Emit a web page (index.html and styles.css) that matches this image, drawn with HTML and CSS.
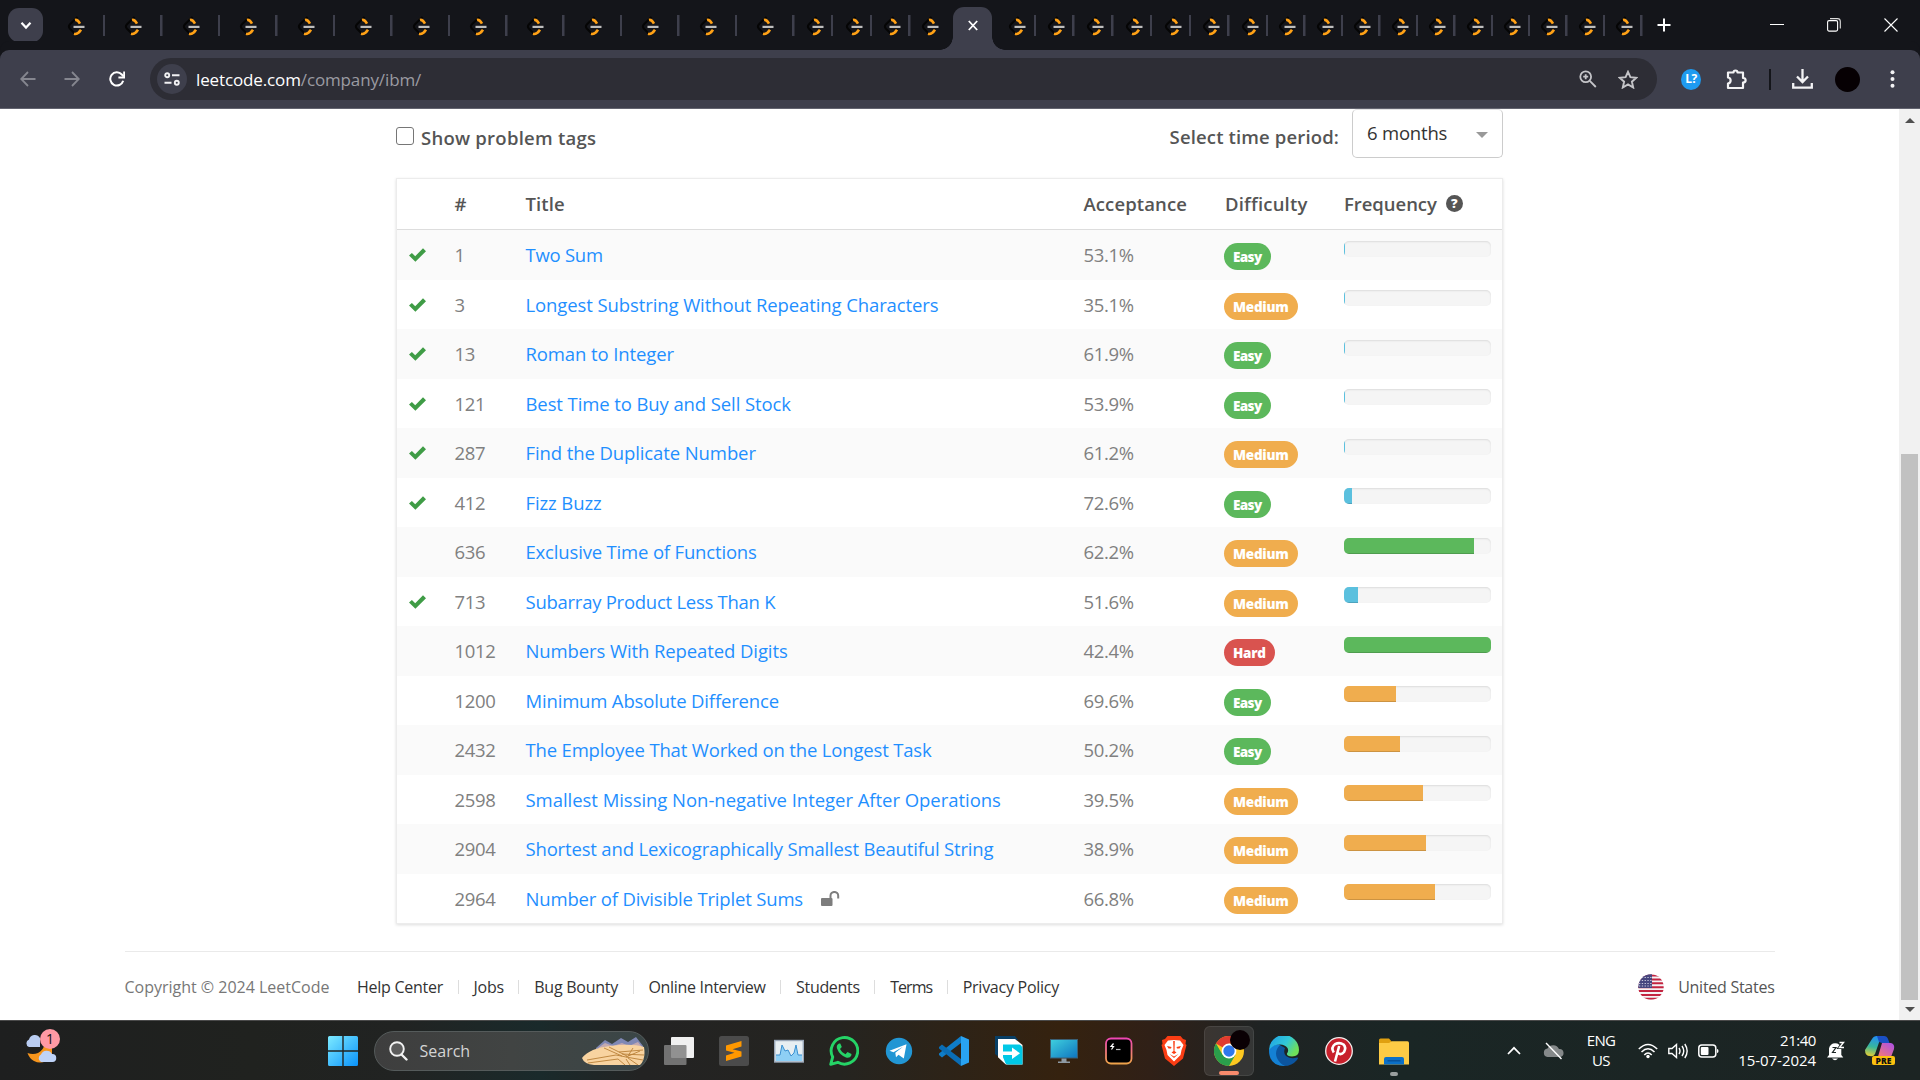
FILE: index.html
```html
<!DOCTYPE html>
<html lang="en">
<head>
<meta charset="utf-8">
<title>IBM - LeetCode</title>
<link rel="stylesheet" href="styles.css">
</head>
<body>
<svg class="defs" width="0" height="0">
  <symbol id="leet" viewBox="0 0 18 20">
    <path d="M10.500 1 3 8.200Q.8 10.500 3 12.800L7.500 17.300Q9.300 19 11 18" fill="none" stroke="#050505" stroke-width="2"/>
    <path d="M8 4Q10.500 3.300 13 7.600" fill="none" stroke="#ffa116" stroke-width="2.600"/>
    <path d="M7 17.800Q10.800 18.800 14 13.800" fill="none" stroke="#ffa116" stroke-width="2.600"/>
    <path d="M6.500 10.900H17.500" stroke="#bdbdbd" stroke-width="2.200"/>
  </symbol>
  <symbol id="tick" viewBox="0 0 17 14"><path d="M0 7.600 2.900 4.900 6.200 8.200 14 .3 17 3.200 6.400 13.800Z" fill="#3f9c46"/></symbol>
</svg>

<header class="tabstrip">
  <div class="tabsearch"><svg width="12" height="9" viewBox="0 0 12 9"><path d="M1.500 1.800 6 6.600 10.500 1.800" fill="none" stroke="#fff" stroke-width="2.200"/></svg></div>
  <nav class="tabs">
    <i class="tab wide"><svg><use href="#leet"/></svg></i><i class="tab wide"><svg><use href="#leet"/></svg></i><i class="tab wide"><svg><use href="#leet"/></svg></i><i class="tab wide"><svg><use href="#leet"/></svg></i><i class="tab wide"><svg><use href="#leet"/></svg></i><i class="tab wide"><svg><use href="#leet"/></svg></i><i class="tab wide"><svg><use href="#leet"/></svg></i><i class="tab wide"><svg><use href="#leet"/></svg></i><i class="tab wide"><svg><use href="#leet"/></svg></i><i class="tab wide"><svg><use href="#leet"/></svg></i><i class="tab wide"><svg><use href="#leet"/></svg></i><i class="tab wide"><svg><use href="#leet"/></svg></i><i class="tab wide"><svg><use href="#leet"/></svg></i>
    <i class="tab mid"><svg><use href="#leet"/></svg></i><i class="tab mid"><svg><use href="#leet"/></svg></i><i class="tab mid"><svg><use href="#leet"/></svg></i>
    <i class="tab before"><svg><use href="#leet"/></svg></i>
    <i class="tab active"><svg class="x" width="10" height="11" viewBox="0 0 10 11"><path d="M.8 1 9.200 10M9.200 1 .8 10" stroke="#fff" stroke-width="1.800"/></svg></i>
    <i class="tab after"><svg><use href="#leet"/></svg></i>
    <i class="tab mid"><svg><use href="#leet"/></svg></i><i class="tab mid"><svg><use href="#leet"/></svg></i><i class="tab mid"><svg><use href="#leet"/></svg></i><i class="tab mid"><svg><use href="#leet"/></svg></i><i class="tab mid"><svg><use href="#leet"/></svg></i><i class="tab mid"><svg><use href="#leet"/></svg></i>
    <i class="tab slim"><svg><use href="#leet"/></svg></i><i class="tab slim"><svg><use href="#leet"/></svg></i><i class="tab slim"><svg><use href="#leet"/></svg></i><i class="tab slim"><svg><use href="#leet"/></svg></i><i class="tab slim"><svg><use href="#leet"/></svg></i><i class="tab slim"><svg><use href="#leet"/></svg></i><i class="tab slim"><svg><use href="#leet"/></svg></i><i class="tab slim"><svg><use href="#leet"/></svg></i><i class="tab slim"><svg><use href="#leet"/></svg></i><i class="tab slim"><svg><use href="#leet"/></svg></i>
  </nav>
  <svg class="newtab" width="14" height="14" viewBox="0 0 14 14"><path d="M7 .5V13.500M.5 7H13.500" stroke="#fff" stroke-width="2"/></svg>
  <div class="winbtns">
    <svg width="14" height="14" viewBox="0 0 14 14"><path d="M0 6.500H14" stroke="#fff"/></svg>
    <svg width="14" height="14" viewBox="0 0 14 14"><rect x=".6" y="2.600" width="10" height="10.500" rx="1.500" fill="none" stroke="#fff" stroke-width="1.100"/><path d="M3 .6H10.500Q13.300.6 13.300 3.500V10.500" fill="none" stroke="#ddd" stroke-width="1.100"/></svg>
    <svg width="14" height="14" viewBox="0 0 14 14"><path d="M.5.5 13.500 13.500M13.500.5.5 13.500" stroke="#fff" stroke-width="1.100"/></svg>
  </div>
</header>

<div class="toolbar">
  <svg class="back" width="16" height="16" viewBox="0 0 16 16"><path d="M15.500 8H1.500M8 1 1.200 8 8 15" fill="none" stroke="#85868f" stroke-width="1.800"/></svg>
  <svg class="fwd" width="16" height="16" viewBox="0 0 16 16"><path d="M.5 8H14.500M8 1 14.800 8 8 15" fill="none" stroke="#85868f" stroke-width="1.800"/></svg>
  <svg class="reload" width="16" height="16" viewBox="0 0 16 16"><path d="M14.200 9.800A6.600 6.600 0 1 1 12.800 3.500L14.500 5.400" fill="none" stroke="#fff" stroke-width="2"/><path d="M15.200.6V6.400H9.400" fill="none" stroke="#fff" stroke-width="2"/></svg>
  <div class="omnibox">
    <span class="site"><svg width="16" height="14" viewBox="0 0 16 14"><g fill="none" stroke="#f1f1f3" stroke-width="1.900"><circle cx="3.200" cy="3.200" r="2"/><path d="M8 3.200H15.500M.5 10.800H7.500"/><circle cx="12.800" cy="10.800" r="2"/></g></svg></span>
    <span class="url"><b>leetcode.com</b>/company/ibm/</span>
    <svg class="mag" width="18" height="18" viewBox="0 0 18 18"><g fill="none" stroke="#c4c4c8" stroke-width="1.800"><circle cx="6.700" cy="6.700" r="5.400"/><path d="M10.800 10.800 16.800 17M6.700 4.200V9.200M4.200 6.700H9.200"/></g></svg>
    <svg class="star" width="20" height="19" viewBox="0 0 20 19"><path d="M10 1.800 12.400 7.200 18.300 7.800 13.900 11.700 15.200 17.500 10 14.400 4.800 17.500 6.100 11.700 1.700 7.800 7.600 7.200Z" fill="none" stroke="#c4c4c8" stroke-width="1.900"/></svg>
  </div>
  <span class="ext">L?</span>
  <svg class="puzzle" width="21" height="21" viewBox="0 0 21 21"><path d="M2 3.500H7.500C7.500.8 11.500.8 11.500 3.500H17V9C20.500 9 20.500 13.500 17 13.500V19H2V14.500C5.500 14 5.500 9 2 8.500Z" fill="none" stroke="#f3f3f5" stroke-width="2.200" stroke-linejoin="round"/></svg>
  <span class="vr"></span>
  <svg class="dl" width="21" height="20" viewBox="0 0 21 20"><path d="M10.500 0V12.500M5 7.500 10.500 13 16 7.500M1.200 14V18.600H19.800V14" fill="none" stroke="#f3f3f5" stroke-width="2.300"/></svg>
  <span class="avatar"></span>
  <svg class="dots" width="5" height="18" viewBox="0 0 5 18"><g fill="#f3f3f5"><circle cx="2.500" cy="2.300" r="2"/><circle cx="2.500" cy="9" r="2"/><circle cx="2.500" cy="15.700" r="2"/></g></svg>
</div>

<div class="viewport">
  <main class="page">
    <section class="content">
      <div class="filters">
        <span class="tags"><i class="box"></i>Show problem tags</span>
        <span class="period"><span class="plabel">Select time period:</span><span class="select">6 months<i></i></span></span>
      </div>
      <div class="table">
        <div class="row head"><span></span><span>#</span><span>Title</span><span>Acceptance</span><span>Difficulty</span><span class="freq">Frequency <i>?</i></span></div>
        <div class="row"><svg><use href="#tick"/></svg><span>1</span><a class="snug">Two Sum</a><span>53.1%</span><b class="easy">Easy</b><div class="bar"><i class="info" style="width:.5%"></i></div></div>
        <div class="row"><svg><use href="#tick"/></svg><span>3</span><a>Longest Substring Without Repeating Characters</a><span>35.1%</span><b class="medium">Medium</b><div class="bar"><i class="info" style="width:.5%"></i></div></div>
        <div class="row"><svg><use href="#tick"/></svg><span>13</span><a>Roman to Integer</a><span>61.9%</span><b class="easy">Easy</b><div class="bar"><i class="info" style="width:.5%"></i></div></div>
        <div class="row"><svg><use href="#tick"/></svg><span>121</span><a>Best Time to Buy and Sell Stock</a><span>53.9%</span><b class="easy">Easy</b><div class="bar"><i class="info" style="width:.5%"></i></div></div>
        <div class="row"><svg><use href="#tick"/></svg><span>287</span><a>Find the Duplicate Number</a><span>61.2%</span><b class="medium">Medium</b><div class="bar"><i class="info" style="width:.5%"></i></div></div>
        <div class="row"><svg><use href="#tick"/></svg><span>412</span><a>Fizz Buzz</a><span>72.6%</span><b class="easy">Easy</b><div class="bar"><i class="info" style="width:5.500%"></i></div></div>
        <div class="row"><span></span><span>636</span><a class="tight">Exclusive Time of Functions</a><span>62.2%</span><b class="medium">Medium</b><div class="bar"><i class="success" style="width:88.500%"></i></div></div>
        <div class="row"><svg><use href="#tick"/></svg><span>713</span><a class="snug">Subarray Product Less Than K</a><span>51.6%</span><b class="medium">Medium</b><div class="bar"><i class="info" style="width:9.600%"></i></div></div>
        <div class="row"><span></span><span>1012</span><a>Numbers With Repeated Digits</a><span>42.4%</span><b class="hard">Hard</b><div class="bar"><i class="success" style="width:100%"></i></div></div>
        <div class="row"><span></span><span>1200</span><a class="tight">Minimum Absolute Difference</a><span>69.6%</span><b class="easy">Easy</b><div class="bar"><i class="warning" style="width:35.400%"></i></div></div>
        <div class="row"><span></span><span>2432</span><a class="tight">The Employee That Worked on the Longest Task</a><span>50.2%</span><b class="easy">Easy</b><div class="bar"><i class="warning" style="width:38.100%"></i></div></div>
        <div class="row"><span></span><span>2598</span><a class="loose">Smallest Missing Non-negative Integer After Operations</a><span>39.5%</span><b class="medium">Medium</b><div class="bar"><i class="warning" style="width:53.800%"></i></div></div>
        <div class="row"><span></span><span>2904</span><a class="tight">Shortest and Lexicographically Smallest Beautiful String</a><span>38.9%</span><b class="medium">Medium</b><div class="bar"><i class="warning" style="width:55.800%"></i></div></div>
        <div class="row"><span></span><span>2964</span><a class="tight">Number of Divisible Triplet Sums<svg class="lock" width="19" height="15" viewBox="0 0 19 15"><rect x="0" y="7" width="11.500" height="8" rx="1" fill="#7d7d7d"/><path d="M9.500 7.500V4.800A3.800 3.800 0 0 1 17.200 4.800V7.500" fill="none" stroke="#7d7d7d" stroke-width="2"/></svg></a><span>66.8%</span><b class="medium">Medium</b><div class="bar"><i class="warning" style="width:61.900%"></i></div></div>
      </div>
    </section>
    <footer class="footer">
      <span class="copy">Copyright © 2024 LeetCode</span>
      <nav class="links"><a>Help Center</a><a>Jobs</a><a>Bug Bounty</a><a class="students">Online Interview</a><a class="students">Students</a><a class="terms">Terms</a><a>Privacy Policy</a></nav>
      <span class="country">
        <svg width="26" height="26" viewBox="0 0 26 26"><clipPath id="fc"><circle cx="13" cy="13" r="12.700"/></clipPath><g clip-path="url(#fc)"><path fill="#f5f3f5" d="M0 0H26V26H0Z"/><path d="M0 1.500H26M0 5.400H26M0 9.300H26M0 13.200H26M0 17H26M0 20.900H26M0 24.800H26" stroke="#c32440" stroke-width="2"/><path d="M0 0H14V14H0Z" fill="#46467f"/><path d="M1 3.500H14M1 6.500H14M1 9.500H14M1 12H14" stroke="#c9c9dc" stroke-width="1.200" stroke-dasharray="1.300 1.500"/></g></svg>
        United States</span>
    </footer>
  </main>
  <aside class="scroll"><i class="up"></i><i class="thumb"></i><i class="down"></i></aside>
</div>

<div class="taskbar">
  <div class="weather">
    <svg width="34" height="36" viewBox="0 0 34 36"><path d="M27 20V27L21 33Q15 36 9 33 4 30 2.500 25 8 27 13 25 18 22 19 18Z" fill="#f6951d"/><path d="M4 19A4 4 0 0 1 4 11.500 6 6 0 0 1 15 10V19Z" fill="#b9cdf2"/><path d="M16 34A4.200 4.200 0 0 1 16 26.500 6 6 0 0 1 27 26 4 4 0 0 1 27.500 34Z" fill="#bfd3f8"/></svg>
    <span>1</span>
  </div>
  <svg class="start" width="30" height="30" viewBox="0 0 30 30"><defs><linearGradient id="wg" x1="0" y1="0" x2="1" y2="1"><stop offset="0" stop-color="#7deaff"/><stop offset="1" stop-color="#0a93fb"/></linearGradient></defs><path d="M1.500 0H14.300V14.300H0V1.500Q0 0 1.500 0ZM15.700 0H28.500Q30 0 30 1.500V14.300H15.700ZM0 15.700H14.300V30H1.500Q0 30 0 28.500ZM15.700 15.700H30V28.500Q30 30 28.500 30H15.700Z" fill="url(#wg)"/></svg>
  <div class="search">
    <svg width="19" height="20" viewBox="0 0 19 20"><circle cx="8" cy="8" r="6.800" fill="#77777788" stroke="#f2f2f2" stroke-width="1.900"/><path d="M12.500 13.500 17.500 18.500" stroke="#f2f2f2" stroke-width="2.400" stroke-linecap="round"/></svg>
    <span>Search</span>
    <svg class="sand" width="63" height="29" viewBox="0 0 63 29"><path d="M14 11 23 3 30 7 39 1 46 5 54 0 61 9V14H14Z" fill="#7f88b5"/><path d="M16 11 23 6 31 9 40 6 47 9 56 5 60 10 50 13Z" fill="#c3a9b0"/><path d="M0 21Q8 11 28 9Q50 6 62 10Q64 22 58 28H12Q2 27 0 21Z" fill="#f8d3a0"/><path d="M5 23 34 18 44 20 58 14M6 26 36 22 43 28M22 11 40 19M27 10 45 19M37 15 61 13M40 17 62 18M44 20 61 23M46 21 56 28M44 22 48 28M51 11 46 19" fill="none" stroke="#b98038" stroke-width=".9"/></svg>
  </div>
  <div class="apps">
    <span><svg width="30" height="30" viewBox="0 0 30 30"><rect x="7" y="1" width="23" height="21" rx="1" fill="#f0f0f0"/><rect x="0" y="9" width="22.500" height="20" rx="1" fill="#808080" opacity=".85"/></svg></span>
    <span><svg width="30" height="30" viewBox="0 0 30 30"><rect width="30" height="30" rx="2.500" fill="#4b4b4b"/><path d="M7 9.500 22.500 5V10.500L13.500 13.300 22.500 15.500V20.500L7 25V19.500L15.500 16.800 7 14.500Z" fill="#ff9800"/></svg></span>
    <span><svg width="30" height="30" viewBox="0 0 30 30"><rect x=".7" y="4.500" width="28.600" height="21.500" fill="#e7eef2" stroke="#9aa7b8" stroke-width="1.400"/><path d="M2 19H6L8 9 11 15 14 14 17 20 20 17 22 9 24 19 28 19V25H2Z" fill="#8ecff5"/><path d="M2 19H6L8 9 11 15 14 14 17 20 20 17 22 9 24 19 28 19" fill="none" stroke="#3a8fd0"/></svg></span>
    <span><svg width="30" height="30" viewBox="0 0 30 30"><path d="M1.700 28.300 3.700 21A13.300 13.300 0 1 1 8.800 26.300Z" fill="none" stroke="#25d366" stroke-width="2.900" stroke-linejoin="round"/><path d="M10 7.500Q7 9 8 12.500 10.500 19 17 21.500 21 22.500 22.300 19.500L22.500 18 18.500 16 16.500 18.200Q12.500 16.500 11 13L12.800 11 11.300 7.500Z" fill="#25d366"/></svg></span>
    <span><svg width="30" height="30" viewBox="0 0 30 30"><circle cx="15" cy="15" r="13.200" fill="#2296d4"/><path d="M5.500 14.800 22.500 8.200 19.800 22.500 14.500 18.800 12 21.300 11.300 16.800 19 10.800 9.500 16.300Z" fill="#fff"/></svg></span>
    <span><svg width="30" height="30" viewBox="0 0 30 30"><path d="M22 7 3 21.500 0 19V17.500L22 0Z" fill="#0f7dc8"/><path d="M22 23 3 8.500 0 11V12.500L22 30Z" fill="#0a6db5"/><path d="M22 0 30 3.500V26.500L22 30Z" fill="#29a3f2"/></svg></span>
    <span><svg width="30" height="30" viewBox="0 0 30 30"><path d="M1 0H21L24 4H6V22L1 18Z" fill="#083f66"/><path d="M4 3H21L28.500 9V28.500H12L4 21Z" fill="#fff"/><path d="M14 8H24Q28.500 9 28.500 13V28.500H14Q10 28 9 23V8Z" fill="#00c8e6"/><path d="M4 3H20L25 8.500H8.500V20L12 28.500 4 21Z" fill="#fff"/><path d="M8.500 15.500H18V11.500L26 17.300 18 23V19H8.500Z" fill="#fff"/></svg></span>
    <span><svg width="30" height="30" viewBox="0 0 30 30"><defs><linearGradient id="pc" x1="0" y1="0" x2="1" y2="1"><stop offset="0" stop-color="#3fd0de"/><stop offset="1" stop-color="#0e74c0"/></linearGradient></defs><rect x="1.500" y="3.500" width="27" height="18.500" fill="url(#pc)" stroke="#3a5f74"/><path d="M12.500 22.500H17.500V25.500H21V27H9V25.500H12.500Z" fill="#8e9aa3"/></svg></span>
    <span><svg width="30" height="30" viewBox="0 0 30 30"><defs><linearGradient id="tg" x1="0" y1="0" x2="0" y2="1"><stop offset="0" stop-color="#ef47b4"/><stop offset="1" stop-color="#eea34a"/></linearGradient></defs><rect x="2" y="2.500" width="25.500" height="25" rx="5" fill="#000" stroke="url(#tg)" stroke-width="1.800"/><path d="M9.500 7.500 7 10.500H9.500L7.500 13.500" fill="none" stroke="#fff" stroke-width="1.200"/><path d="M12 13.500H16.500" stroke="#bbb" stroke-width="1.200"/></svg></span>
    <span><svg width="30" height="30" viewBox="0 0 30 30"><path d="M8.500 0H21.500L24 3 27 4 26.500 8 27.500 9 24 22.500 15 30 6 22.500 2.500 9 3.500 8 3 4 6 3Z" fill="#fb3d14"/><path d="M15 4 21 4.500 24.500 9 22.500 14 21.500 19 15 25.500 8.500 19 7.500 14 5.500 9 9 4.500Z" fill="#fff"/><path d="M8 10 12.500 11 12 12.500H9.500ZM22 10 17.500 11 18 12.500H20.500ZM14.200 5H15.800L15.500 15 17.500 16.500 15 18 12.500 16.500 14.500 15ZM10.500 18 15 20.500 19.500 18 15 22Z" fill="#fb3d14"/></svg></span>
    <span class="current"><svg width="30" height="30" viewBox="0 0 30 30"><circle cx="15" cy="15" r="15" fill="#fdc820"/><path d="M15 15 2 7.500A15 15 0 0 1 28 7.500H15Z" fill="#e13b30"/><path d="M2 7.500A15 15 0 0 0 15 30L21.500 18.800 15 15 8.500 18.800Z" fill="#2a9e4b"/><circle cx="15" cy="15" r="7.400" fill="#fff"/><circle cx="15" cy="15" r="5.700" fill="#2e78ec"/></svg><em></em></span>
    <span><svg width="30" height="30" viewBox="0 0 30 30"><defs><linearGradient id="eg" x1="0" y1="0" x2="1" y2=".5"><stop offset="0" stop-color="#1f9fe6"/><stop offset=".6" stop-color="#31c8d8"/><stop offset="1" stop-color="#6fe05a"/></linearGradient></defs><path d="M0 14Q2 8 10 8.500L16 12Q14 17 17 20 22 23.500 28 21.500 30 21 28 24 23 30 15 30 1 29 0 14Z" fill="#0c559f"/><path d="M0 14Q3 8 11 9 5 15 8 22 10 27 16 30 0 30 0 14Z" fill="#1481d4"/><path d="M0 14A15 15 0 0 1 30 14Q30 20.500 23 20.500 17.500 20 18 17.500 20 15 18.500 12 16 8.500 11 8.500 4 8.500 0 14Z" fill="url(#eg)"/></svg></span>
    <span><svg width="30" height="30" viewBox="0 0 30 30"><circle cx="15" cy="15" r="13.300" fill="#c8202c" stroke="#f2eeee" stroke-width="1.300"/><path d="M11 25.500 15.200 10M9.800 16.500Q6.500 11.500 11 8.200 15.500 6 19.500 8.500 22.500 11.500 20 16 17 19.500 13.700 17" fill="none" stroke="#fff" stroke-width="2.600"/></svg></span>
    <span class="open"><svg width="30" height="30" viewBox="0 0 30 30"><path d="M0 4Q0 2.500 1.500 2.500H10L13 6V10H0Z" fill="#e0a010"/><path d="M0 7H10L13 5.300H28.500Q30 5.300 30 7V28.500H0Z" fill="#fdcb45"/><path d="M5 28.500V23Q5 21 7 21H23Q25 21 25 23V28.500Z" fill="#0b70c8"/><path d="M8.500 24.800H21.500" stroke="#084f97" stroke-width="1.300"/></svg></span>
  </div>
  <div class="tray">
    <svg class="chev" width="14" height="9" viewBox="0 0 14 9"><path d="M1 8 7 1.800 13 8" fill="none" stroke="#fff" stroke-width="1.700"/></svg>
    <svg class="cloud" width="21" height="18" viewBox="0 0 21 18"><path d="M4.500 15A4.300 4.300 0 0 1 4.500 6.500 6.500 6.500 0 0 1 16 7 4 4 0 0 1 17 15Z" fill="#85898a"/><path d="M3 1 18.500 17" stroke="#fff" stroke-width="1.400"/></svg>
    <div class="lang"><span>ENG</span><span>US</span></div>
    <svg class="wifi" width="20" height="16" viewBox="0 0 20 16"><g fill="none" stroke="#fff" stroke-width="1.500"><path d="M.8 6Q10-3 19.200 6M3.500 9Q10 2.500 16.500 9M6.300 12Q10 8 13.700 12"/></g><circle cx="10" cy="13.500" r="1.700" fill="#fff"/></svg>
    <svg class="vol" width="20" height="16" viewBox="0 0 20 16"><g fill="none" stroke="#fff" stroke-width="1.400"><path d="M.8 5.500H4L8.500 1.500V14.500L4 10.500H.8Z"/><path d="M11 5Q13 8 11 11M14 3Q17.500 8 14 13M16.800 1Q21.500 8 16.800 15"/></g></svg>
    <svg class="bat" width="21" height="14" viewBox="0 0 21 14"><rect x=".8" y="1" width="17" height="12" rx="3" fill="none" stroke="#fff" stroke-width="1.500"/><rect x="2.800" y="3" width="7.700" height="8" rx="1" fill="#fff"/><path d="M19 5Q20.500 5 20.500 7T19 9Z" fill="#fff"/></svg>
    <div class="clock"><span>21:40</span><span>15-07-2024</span></div>
    <svg class="bell" width="18" height="20" viewBox="0 0 18 20"><path d="M2 14V7.500A6.200 6 0 0 1 14.300 7.500V14L16.300 16.500H0Z" fill="#fff"/><path d="M5 17.500H11Q8 21 5 17.500Z" fill="#fff"/><path d="M5.500 6.500H9L5.500 11.500H9" fill="none" stroke="#1c2524" stroke-width="1.200"/><path d="M12.500 1.500H16.500L12.500 6.500H16.500" fill="none" stroke="#1c2524" stroke-width="3"/><path d="M12.500 1.500H16.500L12.500 6.500H17" fill="none" stroke="#fff" stroke-width="1.400"/></svg>
    <div class="copilot">
      <svg width="30" height="26" viewBox="0 0 30 26"><defs><linearGradient id="ca" x1=".3" y1="0" x2=".1" y2="1"><stop offset="0" stop-color="#2391f0"/><stop offset=".5" stop-color="#38b79b"/><stop offset="1" stop-color="#f4d02c"/></linearGradient><linearGradient id="cb" x1="1" y1="0" x2=".3" y2="1"><stop offset="0" stop-color="#a94fea"/><stop offset="1" stop-color="#f87a70"/></linearGradient></defs><path d="M7 3Q8.500 0 12 0H19Q16 1 14.500 5L10 18Q8.500 21 5 20 0 20 0 14Z" fill="url(#ca)"/><path d="M12 0H19Q22 0 23 3L24.500 7H17L14 6Z" fill="#1a4fc4"/><path d="M17 7H26Q30 8 29 13L26 21Q25 24 20 24H12Z" fill="url(#cb)"/></svg>
      <span>PRE</span>
    </div>
  </div>
</div>
</body>
</html>
```
FILE: styles.css
```css
* { box-sizing: border-box; }
body {
  margin: 0;
  width: 1920px;
  height: 1080px;
  overflow: hidden;
  display: flex;
  flex-direction: column;
  font-family: "Open Sans", "Noto Sans", sans-serif;
  background: #fff;
}
svg { display: block; flex: none; }
i, em { font-style: normal; }
.defs { position: absolute; }

/* tab strip */
.tabstrip { height: 50px; flex: none; display: flex; background: #14151a; }
.tabsearch { width: 35px; height: 34px; margin: 8px 5px 0 8px; border-radius: 11px; background: #3e3f4c; display: flex; align-items: center; justify-content: center; flex: none; }
.tabs { display: flex; flex: none; height: 50px; }
.tab { display: flex; justify-content: flex-end; padding-top: 16px; flex: none; background: linear-gradient(#3e3f4c, #3e3f4c) right 15px / 2.500px 21px no-repeat; }
.tab svg { width: 18px; height: 20px; }
.wide { width: 57.450px; padding-right: 20.500px; }
.mid { width: 38.700px; padding-right: 9.500px; }
.before { width: 42px; padding-right: 13.500px; background: none; }
.after { width: 44px; padding-right: 10.500px; }
.slim { width: 37.450px; padding-right: 9.500px; }
.active { width: 39.500px; height: 43px; margin-top: 7px; padding-top: 12.500px; justify-content: center; background: #3e3f4c; border-radius: 11px 11px 0 0; position: relative; }
.tab .x { width: 10px; height: 11px; }
.active::before, .active::after { content: ""; position: absolute; bottom: 0; width: 13px; height: 13px; }
.active::before { right: 100%; background: radial-gradient(circle at 0 0, transparent 12.500px, #3e3f4c 13px); }
.active::after { left: 100%; background: radial-gradient(circle at 100% 0, transparent 12.500px, #3e3f4c 13px); }
.newtab { margin: 18px 0 0 14px; }
.winbtns { display: flex; gap: 43px; margin: 18px 22px 0 auto; }

/* toolbar */
.toolbar { height: 59px; flex: none; display: flex; align-items: center; padding: 0 0 0 20px; background: #3e3f4c; border-bottom: 1px solid #62636f; border-radius: 9px 9px 0 0; box-shadow: 0 -9px 0 0 #14151a; }
.fwd { margin-left: 28px; }
.reload { margin-left: 29px; }
.omnibox { width: 1507px; height: 42px; margin-left: 25px; border-radius: 21px; background: #2d2d35; display: flex; align-items: center; padding-left: 7px; flex: none; }
.site { width: 30px; height: 30px; border-radius: 50%; background: #3e3f4c; display: flex; align-items: center; justify-content: center; }
.url { margin-left: 9px; font-size: 17px; letter-spacing: -.13px; color: #9b9ba2; }
.url b { font-weight: 400; color: #fff; }
.mag { margin-left: auto; }
.star { margin: 0 19.500px 0 21px; }
.ext { width: 20px; height: 21px; margin-left: 24px; border-radius: 50%; background: #1e9bf0; color: #fff; font: 700 12px/20px "Open Sans", sans-serif; text-align: center; letter-spacing: -.5px; }
.puzzle { margin-left: 25px; }
.vr { width: 2px; height: 21px; margin-left: 22px; background: #14151a; }
.dl { margin-left: 21px; }
.avatar { width: 25px; height: 25px; margin-left: 22px; border-radius: 50%; background: #060003; }
.dots { margin-left: 30px; }

/* page */
.viewport { height: 911px; flex: none; display: flex; }
.page { width: 1899px; padding: 0 124.500px; }
.content { width: 1107px; margin: 0 auto; }
.filters { height: 69px; display: flex; justify-content: space-between; align-items: flex-start; font-size: 18.500px; font-weight: 600; color: #555; line-height: 26px; }
.tags { display: flex; padding-top: 16px; letter-spacing: .25px; }
.box { width: 18px; height: 18px; margin: 2px 7px 0 0; border: 1px solid #767676; border-radius: 3px; }
.period { display: flex; }
.plabel { padding: 15px 13px 0 0; letter-spacing: .14px; }
.select { width: 151px; height: 49px; border: 1px solid #ccc; border-top-color: #e2e2e4; border-radius: 5px; padding: 10px 14px 0 14px; display: flex; justify-content: space-between; font-weight: 400; letter-spacing: -.2px; color: #333; }
.select i { width: 0; height: 0; margin-top: 12px; border: 6px solid transparent; border-top-color: #999; border-bottom: 0; }
.table { border: 1px solid #ececec; box-shadow: 0 1px 3px #0002; height: 746px; }
.row { display: grid; grid-template-columns: 57.500px 71px 558px 140.500px 120px 147px; height: 49.500px; align-items: center; font-size: 18.500px; line-height: 26px; color: #808080; letter-spacing: -.35px; }
.row:nth-child(even) { background: #fafafa; }
.row > svg { width: 17px; height: 14px; margin: 1px 0 0 12px; }
.row > span, .row a { padding-top: 1px; }
.row a { color: #1f8fff; letter-spacing: -.1px; display: flex; align-items: center; }
.row .tight { letter-spacing: -.17px; }
.row .snug { letter-spacing: -.26px; }
.row .loose { letter-spacing: -.04px; }
.lock { margin-left: 18px; }
.head { height: 51px; padding-bottom: 1px; border-bottom: 1px solid #ddd; font-weight: 600; color: #555; letter-spacing: .1px; }
.head span { padding-top: 0; }
.head span:nth-child(5) { padding-left: 1px; letter-spacing: .2px; }
.head .freq { display: flex; align-items: center; letter-spacing: -.05px; }
.freq i { width: 17px; height: 17px; margin-left: 9px; border-radius: 50%; background: #555; color: #fff; font: 800 13px/17px "Open Sans", sans-serif; text-align: center; }
.row b { justify-self: start; height: 27px; margin-top: 4px; padding: 0 9px; border-radius: 14px; color: #fff; font-size: 13.500px; line-height: 28px; font-weight: 800; letter-spacing: -.25px; }
.row .easy { letter-spacing: -.6px; }
.row .easy, .row .success { background: #5cb85c; }
.row .medium { background: #f0ad4e; }
.row .hard { background: #d9534f; }
.bar { height: 16px; align-self: start; margin-top: 10.600px; border-radius: 5px; background: #f5f5f5; overflow: hidden; box-shadow: inset 0 1px 2px #0000001a; }
.bar i { display: block; height: 100%; box-shadow: inset 0 -1px 0 #00000026; }
.info { background: #5bc0de; }
.warning { background: #f0ad4e; }
.footer { margin-top: 27px; border-top: 1px solid #eaeaea; padding-top: 22px; display: flex; align-items: center; font-size: 16px; line-height: 26px; letter-spacing: -.26px; color: #333; }
.copy { color: #777; letter-spacing: -.01px; width: 232.500px; }
.links { display: flex; align-items: center; }
.links a + a { border-left: 1px solid #ddd; padding-left: 14.800px; margin-left: 14.700px; line-height: 14px; }
.links .students { letter-spacing: -.32px; }
.links .terms { letter-spacing: -.95px; }
.country { margin-left: auto; display: flex; align-items: center; gap: 14px; color: #555; letter-spacing: -.27px; }

.scroll { width: 21px; background: #f1f1f1; display: flex; flex-direction: column; align-items: center; }
.up, .down { border: 5px solid transparent; }
.up { border-bottom-color: #505050; border-top: 0; margin-top: 9px; }
.thumb { width: 17px; height: 546px; margin-top: 331px; background: #c1c1c1; }
.down { border-top-color: #505050; border-bottom: 0; margin-top: 7px; }

/* taskbar */
.taskbar { height: 60px; flex: none; display: flex; align-items: center; border-top: 1px solid #4a4a4a; background: linear-gradient(90deg, #1e1f1f 0, #20221f 250px, #212322 400px, #1a2a2b 540px, #232323 640px, #252420 840px, #35220f 1060px, #302017 1150px, #1f2323 1260px, #1a2625 1400px, #1c2423 1920px); color: #fff; }
.weather { width: 34px; height: 36px; margin: -9px 0 0 25px; position: relative; }
.weather span { position: absolute; left: 15px; top: 1px; width: 20px; height: 20px; border-radius: 50%; background: #ff99a4; color: #111; font-size: 14px; line-height: 20px; text-align: center; }
.start { margin-left: 268.500px; }
.search { width: 275px; height: 40px; margin-left: 16px; padding-left: 14px; border: 1px solid #555b5b; border-radius: 20px; background: linear-gradient(90deg, #3e3e3e, #414443 50%, #3a4647); display: flex; align-items: center; font-size: 16px; color: #d4d4d4; }
.search span { margin-left: 12px; }
.sand { margin: 2px 3px 0 auto; }
.apps { display: flex; margin-left: 5px; }
.apps span { width: 50px; height: 50px; margin-right: 5px; border-radius: 6px; display: flex; align-items: center; justify-content: center; position: relative; }
.apps .current { background: #ffffff17; border: 1px solid #ffffff14; }
.current em { position: absolute; left: 25px; top: 3px; width: 20px; height: 20px; border-radius: 50%; background: #0a0004; }
.current::after, .open::after { content: ""; position: absolute; bottom: 0; width: 20px; height: 4px; border-radius: 2px; background: #f78a6c; }
.open::after { width: 8px; background: #9a9f9f; }
.tray { display: flex; align-items: center; margin-left: auto; padding-right: 25px; }
.cloud { margin-left: 22px; }
.lang, .clock { display: flex; flex-direction: column; margin-top: -2px; font-size: 15px; line-height: 20px; }
.lang { width: 30px; margin-left: 22px; align-items: center; letter-spacing: -.7px; }
.wifi { margin-left: 22px; }
.vol { margin-left: 10px; }
.bat { margin-left: 10px; }
.clock { width: 79px; margin-left: 18px; align-items: flex-end; letter-spacing: -.05px; }
.clock span:first-child { letter-spacing: -.45px; }
.bell { margin-left: 11px; }
.copilot { width: 30px; height: 30px; margin-left: 20px; position: relative; }
.copilot span { position: absolute; left: 7px; top: 20px; width: 23px; height: 9px; border-radius: 2px; background: #fcc10f; color: #111; font: 800 8.500px/9px "Open Sans", sans-serif; text-align: center; }
```
